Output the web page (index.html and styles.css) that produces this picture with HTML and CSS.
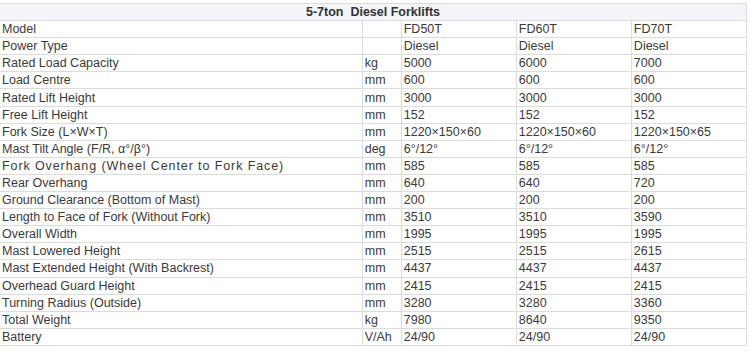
FILE: index.html
```html
<!DOCTYPE html>
<html lang="en">
<head>
  <meta charset="UTF-8" />
  <title>5-7ton Diesel Forklifts</title>
  <link rel="stylesheet" href="styles.css">
</head>
<body>

  <!-- spec table -->
  <table class="spec">
    <colgroup>
      <col class="c-name">
      <col class="c-unit">
      <col class="c-val">
      <col class="c-val">
      <col class="c-val">
    </colgroup>
    <tr class="head"><th colspan="5">5-7ton&nbsp; Diesel Forklifts</th></tr>
    <tr><td>Model</td><td></td><td>FD50T</td><td>FD60T</td><td>FD70T</td></tr>
    <tr><td>Power Type</td><td></td><td>Diesel</td><td>Diesel</td><td>Diesel</td></tr>
    <tr><td>Rated Load Capacity</td><td>kg</td><td>5000</td><td>6000</td><td>7000</td></tr>
    <tr><td>Load Centre</td><td>mm</td><td>600</td><td>600</td><td>600</td></tr>
    <tr><td>Rated Lift Height</td><td>mm</td><td>3000</td><td>3000</td><td>3000</td></tr>
    <tr><td>Free Lift Height</td><td>mm</td><td>152</td><td>152</td><td>152</td></tr>
    <tr><td>Fork Size (L×W×T)</td><td>mm</td><td>1220×150×60</td><td>1220×150×60</td><td>1220×150×65</td></tr>
    <tr><td>Mast Tilt Angle (F/R, α°/β°)</td><td>deg</td><td>6°/12°</td><td>6°/12°</td><td>6°/12°</td></tr>
    <tr><td class="wide">Fork Overhang (Wheel Center to Fork Face)</td><td>mm</td><td>585</td><td>585</td><td>585</td></tr>
    <tr><td>Rear Overhang</td><td>mm</td><td>640</td><td>640</td><td>720</td></tr>
    <tr><td>Ground Clearance (Bottom of Mast)</td><td>mm</td><td>200</td><td>200</td><td>200</td></tr>
    <tr><td>Length to Face of Fork (Without Fork)</td><td>mm</td><td>3510</td><td>3510</td><td>3590</td></tr>
    <tr><td>Overall Width</td><td>mm</td><td>1995</td><td>1995</td><td>1995</td></tr>
    <tr><td>Mast Lowered Height</td><td>mm</td><td>2515</td><td>2515</td><td>2615</td></tr>
    <tr><td>Mast Extended Height (With Backrest)</td><td>mm</td><td>4437</td><td>4437</td><td>4437</td></tr>
    <tr><td>Overhead Guard Height</td><td>mm</td><td>2415</td><td>2415</td><td>2415</td></tr>
    <tr><td>Turning Radius (Outside)</td><td>mm</td><td>3280</td><td>3280</td><td>3360</td></tr>
    <tr><td>Total Weight</td><td>kg</td><td>7980</td><td>8640</td><td>9350</td></tr>
    <tr><td>Battery</td><td>V/Ah</td><td>24/90</td><td>24/90</td><td>24/90</td></tr>
  </table>

</body>
</html>
```
FILE: styles.css
```css
* { margin: 0; padding: 0; box-sizing: border-box; }

body {
  background: #ffffff;
  font-family: "Liberation Sans", Arial, sans-serif;
  font-size: 12.5px;
  color: #3a3a3a;
  padding-top: 3px;
}

/* spec table */
.spec {
  width: 747px;
  border-collapse: collapse;
  table-layout: fixed;
}
.c-name { width: 362px; }
.c-unit { width: 39px; }
.c-val  { width: 115px; }

.spec td,
.spec th {
  height: 17.1px;
  border: 1px solid #dcdcdc;
  padding: 1px 2px 0;
  line-height: 15px;
  text-align: left;
  white-space: nowrap;
  overflow: hidden;
}
.spec td:first-child { border-left: none; }
.spec td.wide { letter-spacing: 0.9px; }

.head th {
  background-color: #f3f5f8;
  text-align: center;
  font-weight: bold;
  color: #333;
  border-left: none;
}
```
